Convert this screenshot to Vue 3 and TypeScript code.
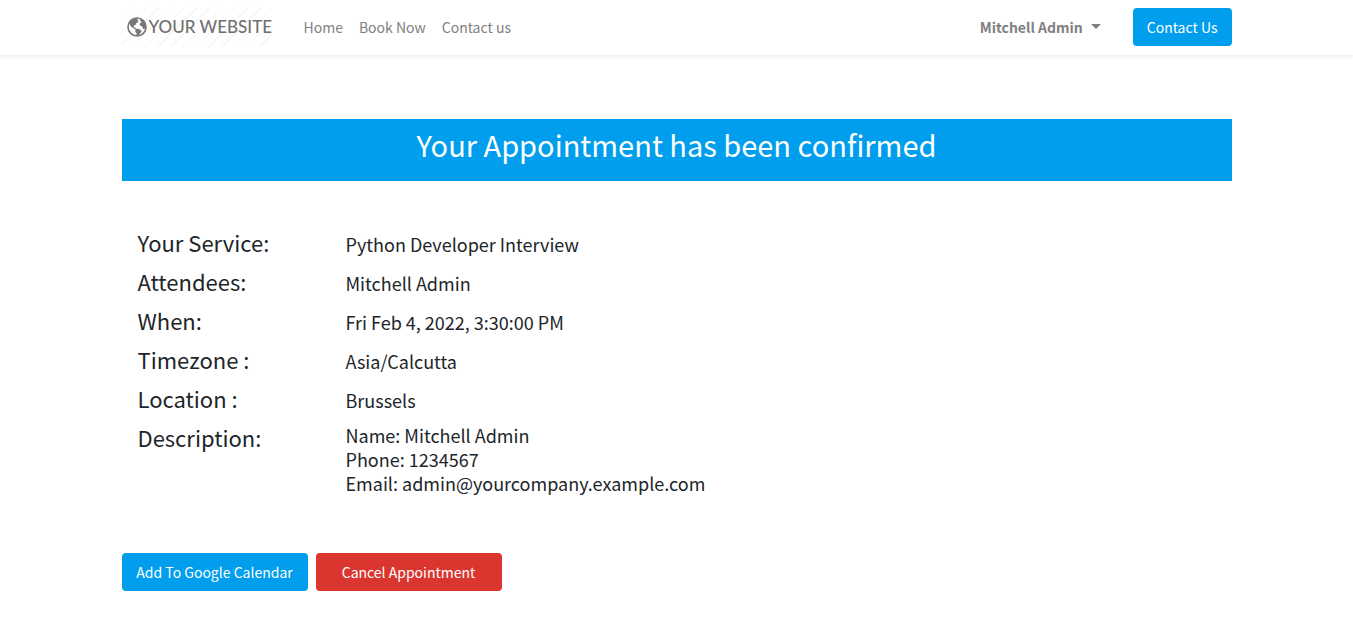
<script setup lang="ts">
interface Link { label: string; href: string }
interface Detail { term: string; lines: string[] }

const links: Link[] = [
  { label: 'Home', href: '#home' },
  { label: 'Book Now', href: '#book' },
  { label: 'Contact us', href: '#contact' },
]

const details: Detail[] = [
  { term: 'Your Service:', lines: ['Python Developer Interview'] },
  { term: 'Attendees:', lines: ['Mitchell Admin'] },
  { term: 'When:', lines: ['Fri Feb 4, 2022, 3:30:00 PM'] },
  { term: 'Timezone :', lines: ['Asia/Calcutta'] },
  { term: 'Location :', lines: ['Brussels'] },
  {
    term: 'Description:',
    lines: ['Name: Mitchell Admin', 'Phone: 1234567', 'Email: admin@yourcompany.example.com'],
  },
]
</script>

<template>
  <div class="page">
    <header class="site-header">
      <nav class="container navbar" aria-label="Main">
        <a class="logo" href="#home">
          <svg class="globe" viewBox="0 0 20 20" aria-hidden="true">
            <circle cx="10" cy="10" r="9" fill="#fff" stroke="#777" stroke-width="1.6" />
            <path
              fill="#777"
              d="M4 3.800 6.400 2 9 1.400l1.800.6-.6 1.200 1.200.4-.4 1.600-2 1 .2 1.400-1.800.6-.8 1.200.4 1.200 1.600.2.8 1.200-1.200.2L6 11 4 9.600 2.800 7.200l-.4-1z"
            />
            <path
              fill="#777"
              d="m8.600 12.200 2-.6 2.200 1 1.800 1-.4 1.600-1.400 1.200-.8 1.800-1.600 1-1-.4.2-2.600-1.400-1.800z"
            />
            <path
              fill="#777"
              d="m13.200 2 2.200 1.200 2 2.400 1 3.200-.2 2.400-1.400 1-1.200-1.200-.2-1.600-1.800-.4-1-1.400.8-1.800 1.400-.6-.8-1-1-.4z"
            />
          </svg>
          <span>YOUR WEBSITE</span>
        </a>
        <ul class="menu">
          <li v-for="link in links" :key="link.href">
            <a class="nav-link" :href="link.href">{{ link.label }}</a>
          </li>
        </ul>
        <button class="user-menu" type="button" aria-haspopup="true">
          Mitchell Admin<span class="caret" aria-hidden="true"></span>
        </button>
        <a class="btn primary" href="#contact">Contact Us</a>
      </nav>
    </header>

    <main class="container">
      <h1 class="banner">Your Appointment has been confirmed</h1>

      <dl class="details">
        <div v-for="detail in details" :key="detail.term" class="row">
          <dt>{{ detail.term }}</dt>
          <dd :class="{ multi: detail.lines.length > 1 }">
            <div v-for="line in detail.lines" :key="line">{{ line }}</div>
          </dd>
        </div>
      </dl>

      <div class="actions">
        <button class="btn primary" type="button">Add To Google Calendar</button>
        <button class="btn danger" type="button">Cancel Appointment</button>
      </div>
    </main>
  </div>
</template>

<style>
body {
  margin: 0;
  background: #fff;
}
</style>

<style scoped>
.page {
  color: #212529;
  font-family: "Noto Sans CJK SC", "Noto Sans", sans-serif;
  font-size: 14px;
  line-height: 24px;
}

.container {
  box-sizing: border-box;
  max-width: 1140px;
  margin: 0 auto;
  padding: 0 15px;
}

.site-header {
  box-shadow: 0 2px 4px rgba(0, 0, 0, 0.08);
}

.navbar {
  display: flex;
  align-items: center;
  min-height: 55px;
  padding-bottom: 1px;
}

.logo {
  box-sizing: border-box;
  display: flex;
  align-items: center;
  width: 150px;
  height: 40px;
  margin-right: 24px;
  padding-left: 5px;
  gap: 2px;
  background: repeating-linear-gradient(135deg, #fff 0 8px, #f5f5f5 8px 9px);
  color: #707070;
  font-family: Lato, sans-serif;
  font-size: 17px;
  font-weight: 500;
  text-decoration: none;
  white-space: nowrap;
}

.globe {
  flex: none;
  width: 20px;
  height: 20px;
}

.menu {
  display: flex;
  margin: 0 auto 0 0;
  padding: 0;
  list-style: none;
}

.nav-link {
  display: block;
  padding: 8px;
  color: #808080;
  text-decoration: none;
}

.user-menu {
  display: flex;
  align-items: center;
  gap: 8px;
  margin-right: 32px;
  padding: 0;
  border: 0;
  background: none;
  color: #808080;
  font: inherit;
  font-weight: 700;
}

.caret {
  margin-bottom: 2px;
  border-top: 5px solid currentColor;
  border-right: 5px solid transparent;
  border-left: 5px solid transparent;
}

.btn {
  box-sizing: border-box;
  padding: 7px 14px;
  border: 0;
  border-radius: 4px;
  color: #fff;
  font: inherit;
  text-align: center;
  text-decoration: none;
}

.primary {
  background: #009eed;
}

.danger {
  background: #da362f;
}

.banner {
  margin: 64px 0 46px;
  padding: 6px 16px 18px;
  background: #009eed;
  color: #fff;
  font-size: 29px;
  font-weight: 400;
  line-height: 38px;
  text-align: center;
}

.details {
  margin: 0;
  padding: 0 16px;
}

.row {
  display: flex;
  min-height: 39px;
}

dt {
  flex: none;
  width: 208px;
  font-size: 22px;
  line-height: 30px;
}

dd {
  margin: 0;
  padding-top: 5px;
  font-size: 18px;
}

dd.multi {
  padding-top: 1px;
}

.actions {
  display: flex;
  gap: 8px;
  padding: 58px 0 32px;
}

.actions .btn {
  min-width: 186px;
}
</style>
